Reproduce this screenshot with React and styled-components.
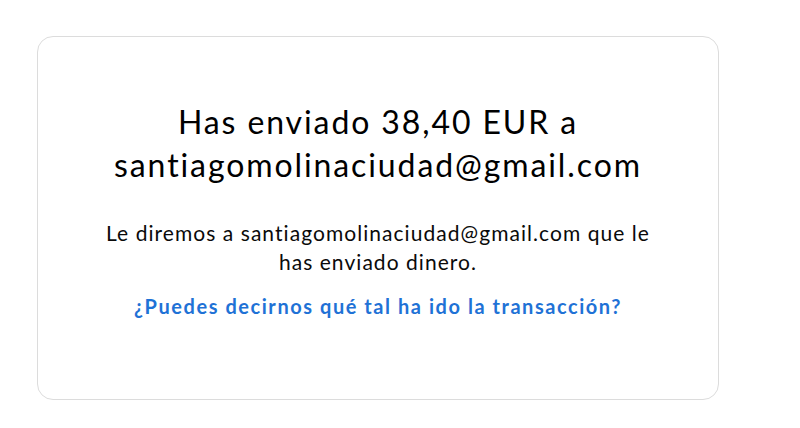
import React from "react";
import styled, { createGlobalStyle } from "styled-components";

const Global = createGlobalStyle`
  html, body { margin: 0; padding: 0; background: #ffffff; }
  body {
    font-family: Lato, "Open Sans", "Liberation Sans", sans-serif;
    color: #000000;
    font-variant-ligatures: none;
    font-feature-settings: "liga" 0;
  }
`;

const Page = styled.div`
  width: 800px;
  height: 428px;
  padding: 36px 0 0 37px;
  box-sizing: border-box;
`;

const Card = styled.section`
  width: 682px;
  height: 364px;
  box-sizing: border-box;
  border: 1px solid #dcdcdc;
  border-radius: 16px;
  padding: 63px 30px 0;
  display: flex;
  flex-direction: column;
  align-items: center;
  text-align: center;
`;

const Title = styled.h1`
  margin: 0;
  font-size: 32px;
  line-height: 43px;
  font-weight: 400;
  letter-spacing: 1.9px;
  color: #000000;
`;

const Body = styled.p`
  margin: 32px 0 0;
  width: 570px;
  font-size: 21px;
  line-height: 29px;
  letter-spacing: 1.05px;
  color: #0a0a0a;
`;

const Link = styled.a`
  margin-top: 16px;
  font-size: 20px;
  line-height: 28px;
  font-weight: 700;
  letter-spacing: 1.55px;
  color: #1f72d6;
  text-decoration: none;
`;

export default function App() {
  return (
    <>
      <Global />
      <Page>
        <Card>
          <Title>
            Has enviado 38,40 EUR a
            <br />
            santiagomolinaciudad@gmail.com
          </Title>
          <Body>
            Le diremos a santiagomolinaciudad@gmail.com que le has enviado dinero.
          </Body>
          <Link href="#">¿Puedes decirnos qué tal ha ido la transacción?</Link>
        </Card>
      </Page>
    </>
  );
}
